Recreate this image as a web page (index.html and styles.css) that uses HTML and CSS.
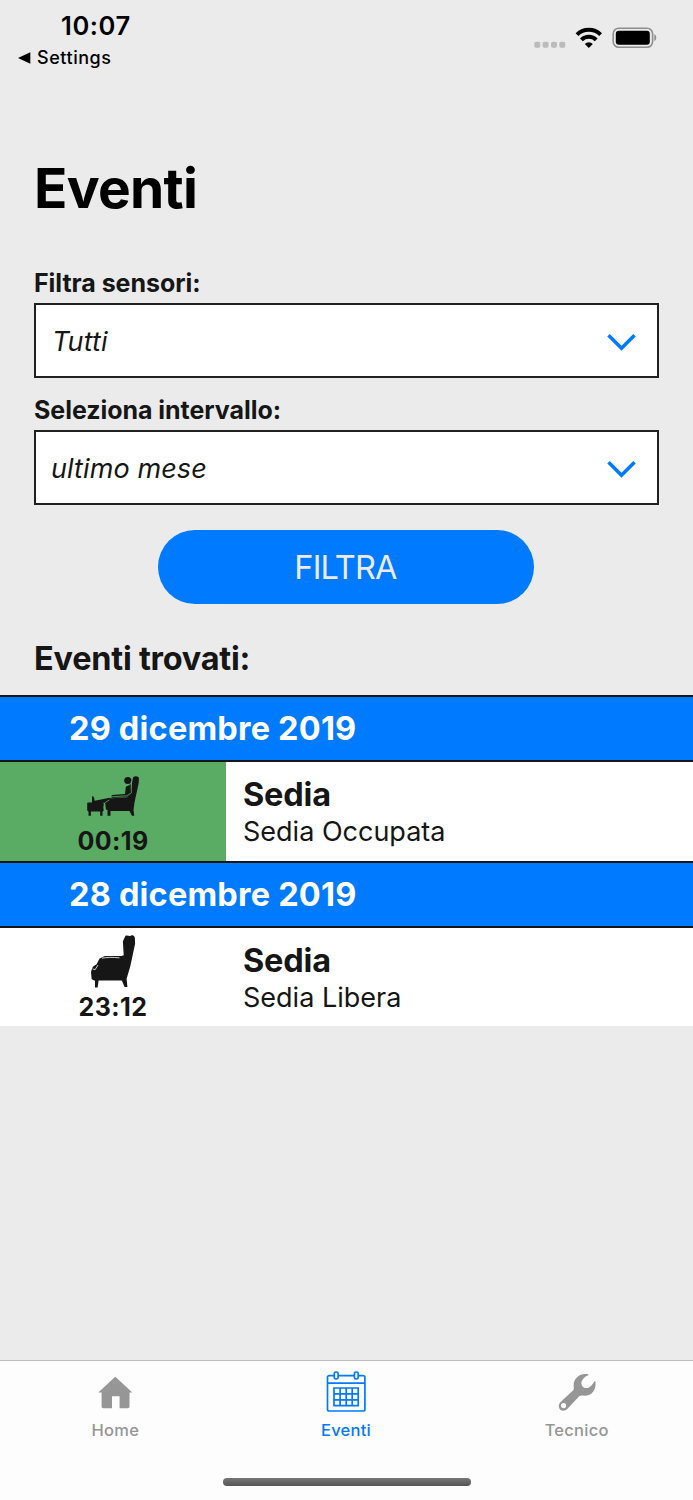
FILE: index.html
```html
<!DOCTYPE html>
<html lang="it">
<head>
<meta charset="utf-8">
<title>Eventi</title>
<link rel="stylesheet" href="styles.css">
</head>
<body>
<div class="screen">
  <header class="status">
    <div class="status-left">
      <div class="clock"><span>10:07</span></div>
      <div class="back">
        <svg width="13" height="12" viewBox="0 0 13 12"><path d="M0 6 12.3.3v11.4z" fill="#000"/></svg>
        <span class="back-label">Settings</span>
      </div>
    </div>
    <svg class="status-icons" width="124" height="24" viewBox="0 0 124 24">
      <g fill="#bbb">
        <rect x="0.3" y="15.8" width="6" height="6" rx="1.8"/><rect x="8.6" y="15.8" width="6" height="6" rx="1.8"/>
        <rect x="17" y="15.8" width="6" height="6" rx="1.8"/><rect x="25.3" y="15.8" width="6" height="6" rx="1.8"/>
      </g>
      <g fill="none" stroke="#000" stroke-width="4">
        <path d="M43 8.6a17 17 0 0 1 23.6 0"/>
        <path d="M47.4 13.8a10.5 10.5 0 0 1 14.8 0"/>
      </g>
      <path d="M54.8 22 50.800 18a5.500 5.500 0 0 1 8 0z" fill="#000"/>
      <rect x="79.2" y="2.2" width="39.4" height="19" rx="5.5" fill="none" stroke="#8e8e8e" stroke-width="1.6"/>
      <rect x="81.8" y="4.8" width="34" height="14" rx="3" fill="#000"/>
      <path d="M120.3 8.3c2.6 1 2.6 5.8 0 6.8z" fill="#8e8e8e"/>
    </svg>
  </header>

  <main class="content">
    <h1 class="title"><span>Eventi</span></h1>
    <section class="filters">
      <div class="label">Filtra sensori:</div>
      <div class="select"><span class="value">Tutti</span>
        <svg width="30" height="18" viewBox="0 0 30 18"><path d="M1.500 2.200 14.500 15.200 27.500 2.200" fill="none" stroke="#007aff" stroke-width="3.500"/></svg>
      </div>
      <div class="label">Seleziona intervallo:</div>
      <div class="select"><span class="value value-range">ultimo mese</span>
        <svg width="30" height="18" viewBox="0 0 30 18"><path d="M1.500 2.200 14.500 15.200 27.500 2.200" fill="none" stroke="#007aff" stroke-width="3.500"/></svg>
      </div>
      <button class="submit">FILTRA</button>
      <h2 class="found">Eventi trovati:</h2>
    </section>

    <section class="events">
      <div class="date">29 dicembre 2019</div>
      <article class="event">
        <div class="state occupied">
          <svg class="chair" width="60" height="54" viewBox="0 6 60 54">
            <g fill="#161616">
              <circle cx="44.800" cy="18.500" r="3.600"/>
              <path d="M50 15.500c2-2 5.500-1.400 5.900.7l-.2 4.800-4.200 19.500-1 7.500.8 5.700h-2.400l-2.400-4.800H27.500v4.800h-3V48l-1.600-.6-.8-6.400 2.200-1.500.5-3.600 3.700.4 15.100-.8 3.600-3z"/>
              <path d="M47.800 21.500 48 32l-4.500 3.200-15 .7.3-2.800L42 32l.7-6.500c1-2.200 3.200-1 5.100-4z"/>
              <path d="M9 34.500c1-.9 2 .2 2.100 1.500l.6 2.700 15-2.900v4.500L18.400 41H9z"/>
              <path d="M5 40.500h14.700c1.500 1 1.300 2.700.6 4l.4 4.200-1.200.7v4.300h-2.300v-4.300H7.900v4.300H5.500v-4.300L4.200 48.500V41z"/>
            </g>
            <path d="M48.300 19v12l-4.600 2.800-14.900 1M21.600 41v8M22.400 40.300l4-2.300" fill="none" stroke="#5aac64" stroke-width=".8"/>
          </svg>
          <time class="time">00:19</time>
        </div>
        <div class="detail"><div class="name">Sedia</div><div class="desc">Sedia Occupata</div></div>
      </article>
      <div class="date">28 dicembre 2019</div>
      <article class="event last">
        <div class="state">
          <svg class="chair" width="60" height="54" viewBox="0 0 60 54">
            <path fill="#161616" d="M42.500 1.800c2-1.300 3.600 1 5.200-.1 2.200-1.200 4 .7 4.200 2.200l.2 5.800-4.800 22.500-3.700 12.500.8 8.300h-2.800l-2.800-6.400H15.600l-1 6.800h-2.600v-6.700c-3-1-3.200-1.200-3.400-1.900l-.6-6.700 1-3.300c.3-2 2.400-3.400 4.400-4.300l3.200-6 5.200-2.400h16.500l2.400-.8-.8-14z"/>
            <path d="M19 24.200c5-1 10-1 17.500-.4M9.500 34.800l2.500 1 3-4.800" fill="none" stroke="#fff" stroke-width=".8"/>
          </svg>
          <time class="time">23:12</time>
        </div>
        <div class="detail"><div class="name">Sedia</div><div class="desc">Sedia Libera</div></div>
      </article>
    </section>
  </main>

  <footer class="footer">
    <nav class="tabs">
      <a class="tab">
        <svg width="44" height="44" viewBox="0 0 44 44"><path fill="#969696" d="M22.300 5.800 39.300 21.400h-2.800v14.200c0 1-.8 1.700-1.700 1.700h-8.200v-12h-7.600v12h-8.700c-1 0-1.700-.7-1.700-1.700V21.400H5.300z"/></svg>
        <span>Home</span>
      </a>
      <a class="tab active">
        <svg width="44" height="44" viewBox="0 0 44 44">
          <g fill="none" stroke="#007aff" stroke-width="1.700">
            <path d="M10.300 4.600H5.200c-1 0-1.700.6-1.700 1.600v32.200c0 1 .7 1.600 1.700 1.600h34c1 0 1.700-.6 1.700-1.600V6.200c0-1-.7-1.600-1.700-1.600h-4.800M14 4.600h16.500M3.500 12.200h37.400"/>
            <rect x="10.300" y="1" width="3.800" height="7" rx="1.600"/><rect x="30.400" y="1" width="3.800" height="7" rx="1.600"/>
            <path d="M10 17h24.200v17.700H10zM16.100 17v17.700M22.200 17v17.700M28.200 17v17.700M10 22.900h24.200M10 28.800h24.200"/>
          </g>
        </svg>
        <span>Eventi</span>
      </a>
      <a class="tab">
        <svg width="44" height="44" viewBox="0 0 44 44"><path fill="#969696" fill-rule="evenodd" d="M33.200 3.200c.5.500.2 1-.5 1.200-3 .8-5 3.500-6.200 6.300-.6 2.800.7 5.300 3.200 6.200 2.500.6 5-.4 6.800-2.400l2.800-3.800c.5-.6 1.200-.4 1.200.5C41.200 18.500 37 24.800 29.800 24.800c-2.300 0-4.200-.7-5.600.4l-12 12.800c-2.400 2.500-6.400 2.200-7.800-.5-1.200-2.200-.7-4.700 1.200-6.500l12.900-12c.7-1.400 0-3.600.2-6C19.200 6.500 25.500 1.600 33.200 3.200zM8.600 32a2.600 2.600 0 1 0 0 5.200 2.600 2.600 0 0 0 0-5.200z"/></svg>
        <span>Tecnico</span>
      </a>
    </nav>
    <div class="indicator"></div>
  </footer>
</div>
</body>
</html>
```
FILE: styles.css
```css
* { box-sizing: border-box; }
body { margin: 0; font-family: Inter, "Liberation Sans", sans-serif; color: #161616; background: #ebebeb; }
h1, h2 { margin: 0; }
svg { display: block; flex: none; }
.screen { width: 693px; height: 1500px; display: flex; flex-direction: column; background: #ebebeb; white-space: nowrap; }

.status { height: 148px; display: flex; justify-content: space-between; padding: 11px 35px 0 18px; color: #000; }
.clock { padding-left: 43px; font-size: 25.5px; line-height: 30px; font-weight: 600; letter-spacing: 0.6px; }
.back { display: flex; align-items: center; gap: 6px; height: 33px; font-size: 18px; font-weight: 500; letter-spacing: 0.55px; }
.status-icons { margin-top: 15px; }

.content { flex: 1; }
.title { padding-left: 34px; height: 80px; line-height: 80px; font-size: 55px; font-weight: 700; letter-spacing: -0.7px; color: #000; }
.filters { padding: 40px 34px 0; display: flex; flex-direction: column; }
.label { height: 30px; line-height: 30px; font-size: 25px; font-weight: 650; margin-bottom: 5px; letter-spacing: -0.05px; }
.select { height: 75px; margin-bottom: 17px; padding: 2px 20px 0 16px; display: flex; align-items: center; justify-content: space-between; border: 2px solid #202020; background: #fff; }
.value { font-size: 27px; font-style: italic; letter-spacing: 0.1px; }
.value-range { margin-left: -1px; }
.submit { width: 376px; height: 74px; margin: 8px 0 0 124.4px; padding: 1px 2px 0 0; border: 0; border-radius: 37px; background: #007aff; color: #ebebeb; font: 400 32.5px Inter, sans-serif; letter-spacing: -0.9px; }
.found { height: 40px; line-height: 40px; margin: 35px 0 16px; font-size: 32.5px; font-weight: 650; letter-spacing: -0.25px; }

.date { height: 67px; padding-left: 69px; line-height: 63px; border-top: 2px solid #161616; border-bottom: 2px solid #161616; background: #007aff; color: #fff; font-size: 32.5px; font-weight: 700; letter-spacing: 0.2px; }
.event { display: flex; height: 99px; background: #fff; }
.last { height: 98px; }
.state { width: 226px; display: flex; flex-direction: column; align-items: center; padding-top: 6px; }
.occupied { background: #5aac64; }
.time { height: 30px; margin-top: 4px; line-height: 30px; font-size: 25px; font-weight: 700; letter-spacing: 0.4px; }
.detail { padding: 13px 0 0 17px; }
.name { height: 39px; line-height: 39px; font-size: 32.5px; font-weight: 700; letter-spacing: -0.2px; }
.desc { height: 36px; line-height: 36px; font-size: 27px; }

.footer { height: 140px; border-top: 1px solid #bcbcbc; background: #fdfdfd; display: flex; flex-direction: column; align-items: center; }
.tabs { width: 693px; height: 117px; padding: 10px 1px 0 0; display: grid; grid-template-columns: repeat(3, 1fr); }
.tab { display: flex; flex-direction: column; align-items: center; gap: 4px; color: #969696; font-size: 16.5px; line-height: 22px; font-weight: 500; letter-spacing: 0.25px; }
.active { color: #007aff; }
.indicator { width: 248px; height: 8px; border-radius: 4px; background: linear-gradient(#777, #555); }
```
